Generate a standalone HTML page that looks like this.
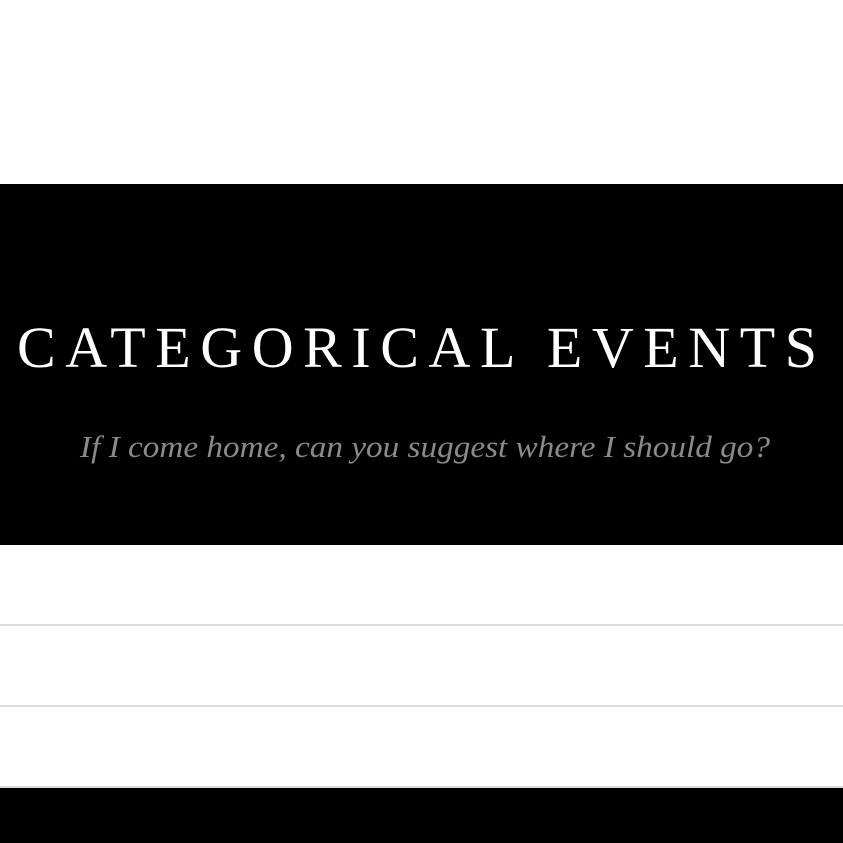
<!DOCTYPE html>
<html><head><meta charset="utf-8"><style>
html,body{margin:0;padding:0;background:#fff;width:843px;height:843px;overflow:hidden}
.band{position:absolute;left:0;top:184px;width:843px;height:361px;background:#000}
.line{position:absolute;left:0;width:843px;height:2px;background:#dcdcdc}
.foot{position:absolute;left:0;top:788px;width:843px;height:55px;background:#000}
svg{position:absolute;left:0;top:0}
</style></head><body>
<div class="band"></div>
<div class="line" style="top:624px"></div>
<div class="line" style="top:705px"></div>
<div class="line" style="top:786px"></div>
<div class="foot"></div>
<svg width="843" height="843">
<text x="17" y="367" textLength="800" lengthAdjust="spacing" font-family="Liberation Serif, serif" font-size="58" fill="#fff">CATEGORICAL EVENTS</text>
<text x="80" y="457" textLength="690" lengthAdjust="spacingAndGlyphs" font-family="Liberation Serif, serif" font-style="italic" font-size="31" fill="#8a8a8a">If I come home, can you suggest where I should go?</text>
</svg>
</body></html>
